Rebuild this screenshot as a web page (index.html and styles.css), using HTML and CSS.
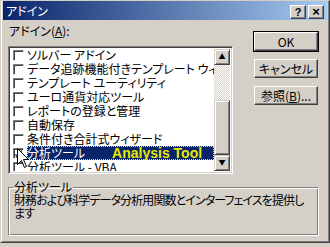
FILE: index.html
```html
<!DOCTYPE html>
<html lang="ja">
<head>
  <meta charset="UTF-8" />
  <title>アドイン</title>
  <link rel="stylesheet" href="styles.css">
</head>
<body>
  <div class="window">
    <div class="titlebar">
      <span class="title">アドイン</span>
      <div class="title-buttons">
        <span class="tbtn">?</span>
        <span class="tbtn close">×</span>
      </div>
    </div>

    <div class="content">
      <div class="left">
        <div class="label">アドイン(<u>A</u>):</div>
        <div class="listbox">
          <ul class="items">
            <li><span class="check"></span><span class="name">ソルバー アドイン</span></li>
            <li><span class="check"></span><span class="name">データ追跡機能付きテンプレート ウィザード</span></li>
            <li><span class="check"></span><span class="name">テンプレート ユーティリティ</span></li>
            <li><span class="check"></span><span class="name">ユーロ通貨対応ツール</span></li>
            <li><span class="check"></span><span class="name">レポートの登録と管理</span></li>
            <li><span class="check"></span><span class="name">自動保存</span></li>
            <li><span class="check"></span><span class="name">条件付き合計式ウィザード</span></li>
            <li class="selected"><span class="check checked">✓</span><span class="name">分析ツール<span class="note">Analysis Tool</span></span></li>
            <li><span class="check"></span><span class="name">分析ツール - VBA</span></li>
          </ul>
          <div class="scrollbar">
            <div class="sbtn">▲</div>
            <div class="track"></div>
            <div class="thumb"></div>
            <div class="sbtn">▼</div>
          </div>
          <!-- mouse pointer over the checkbox -->
          <svg class="cursor" width="13" height="21" viewBox="0 0 13 21">
            <path d="M0.5 0.5 L0.5 16.5 L4.5 12.5 L7.5 19.5 L9.5 18.5 L6.5 11.5 L11.5 11.5 Z" fill="#fff" stroke="#000" stroke-width="1"/>
          </svg>
        </div>
      </div>

      <div class="buttons">
        <button class="btn default">OK</button>
        <button class="btn">キャンセル</button>
        <button class="btn">参照(<u>B</u>)...</button>
      </div>
    </div>

    <fieldset class="group">
      <legend>分析ツール</legend>
      <p>財務および科学データ分析用関数とインターフェイスを提供します</p>
    </fieldset>
  </div>
</body>
</html>
```

FILE: styles.css
```css
body {
  margin: 0;
  background: #d4d0c8;
  font-family: "Noto Sans CJK JP", "Liberation Sans", sans-serif;
  font-size: 12px;
  font-feature-settings: "palt";
  color: #000;
}

.window {
  width: 330px;
  height: 243px;
  box-sizing: border-box;
  background: #d4d0c8;
  border: 1px solid;
  border-color: #d4d0c8 #404040 #404040 #d4d0c8;
  box-shadow: inset 1px 0 0 #fff, inset -1px -1px 0 #808080;
  padding: 0 2px 2px 2px;
}

.titlebar {
  height: 19px;
  display: flex;
  align-items: center;
  justify-content: space-between;
  background: linear-gradient(to right, #0a246a, #a6caf0);
  padding: 0 3px 0 3px;
}

.title {
  color: #fff;
  font-size: 12px;
  line-height: 19px;
}

.title-buttons {
  display: flex;
  gap: 2px;
  padding-top: 3px;
}

.tbtn {
  width: 16px;
  height: 14px;
  box-sizing: border-box;
  background: #d4d0c8;
  border: 1px solid;
  border-color: #fff #404040 #404040 #fff;
  box-shadow: inset -1px -1px 0 #808080;
  font-family: "Liberation Sans", sans-serif;
  font-weight: bold;
  font-size: 11px;
  line-height: 12px;
  text-align: center;
}

.tbtn.close {
  font-size: 13px;
}

.content {
  display: flex;
  padding: 3px 0 0 5px;
}

.left {
  width: 225px;
}

.label {
  height: 23px;
  line-height: 16px;
  padding-left: 1px;
}

.listbox {
  position: relative;
  height: 128px;
  box-sizing: border-box;
  background: #fff;
  border: 1px solid;
  border-color: #808080 #fff #fff #808080;
  box-shadow: inset 1px 1px 0 #404040, inset -1px -1px 0 #d4d0c8;
  padding: 1px 2px 2px 2px;
  display: flex;
}

.items {
  list-style: none;
  margin: 0;
  padding: 0;
  flex: 1;
  overflow: hidden;
}

.items li {
  height: 14px;
  display: flex;
  align-items: center;
  white-space: nowrap;
  padding-left: 2px;
}

.check {
  width: 11px;
  height: 11px;
  box-sizing: border-box;
  border: 1px solid;
  border-color: #808080 #fff #fff #808080;
  box-shadow: inset 1px 1px 0 #404040;
  background: #fff;
  margin-right: 3px;
  flex: none;
  font-size: 10px;
  line-height: 10px;
  text-align: center;
  font-weight: bold;
}

.name {
  flex: 1;
  line-height: 14px;
  overflow: hidden;
}

.selected .name {
  background: #0a246a;
  color: #fff;
  outline: 1px dotted #d4d0c8;
  outline-offset: -1px;
}

.note {
  margin-left: 27px;
  color: #e8e800;
  font-family: "Liberation Sans", sans-serif;
  font-weight: bold;
  font-size: 14px;
}

.scrollbar {
  width: 16px;
  display: flex;
  flex-direction: column;
  flex: none;
  margin-top: 1px;
}

.sbtn, .thumb {
  height: 16px;
  box-sizing: border-box;
  background: #d4d0c8;
  border: 1px solid;
  border-color: #d4d0c8 #404040 #404040 #d4d0c8;
  box-shadow: inset 1px 1px 0 #fff, inset -1px -1px 0 #808080;
  font-size: 7px;
  line-height: 13px;
  text-align: center;
}

.track {
  flex: 1;
  background: repeating-conic-gradient(#fff 0 25%, #d4d0c8 0 50%) 0 0 / 2px 2px;
}

.thumb {
  height: 55px;
}

.cursor {
  position: absolute;
  left: 8px;
  top: 101px;
}

.buttons {
  display: flex;
  flex-direction: column;
  gap: 8px;
  padding: 9px 0 0 21px;
}

.btn {
  width: 64px;
  height: 19px;
  box-sizing: border-box;
  background: #d4d0c8;
  border: 1px solid;
  border-color: #fff #404040 #404040 #fff;
  box-shadow: inset -1px -1px 0 #808080;
  font-family: "Noto Sans CJK JP", "Liberation Sans", sans-serif;
  font-size: 12px;
  font-feature-settings: "palt";
  padding: 0;
  line-height: 15px;
}

.btn.default {
  outline: 1px solid #000;
}

.group {
  margin: 7px 8px 0 5px;
  height: 55px;
  box-sizing: border-box;
  border: 1px solid;
  border-color: #808080 #fff #fff #808080;
  box-shadow: inset 1px 1px 0 #fff, inset -1px -1px 0 #808080;
  padding: 0 5px;
}

.group legend {
  padding: 0 1px;
  margin-left: -1px;
  line-height: 12px;
}

.group p {
  margin: 0;
  line-height: 13px;
  letter-spacing: -0.9px;
}
```
